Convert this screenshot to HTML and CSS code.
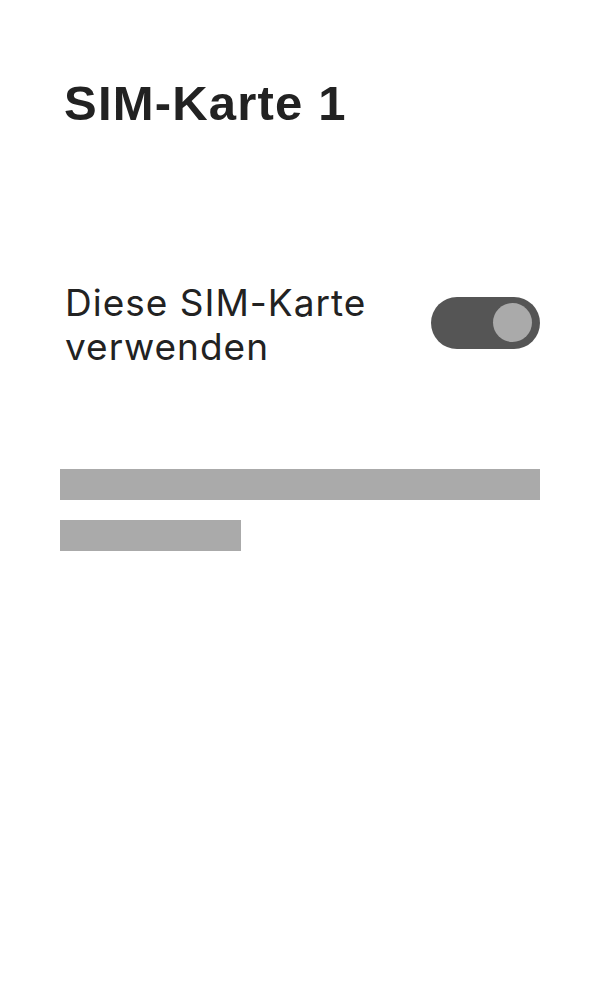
FILE: index.html
```html
<!DOCTYPE html>
<html lang="de">
<head>
<meta charset="utf-8">
<title>SIM-Karte 1</title>
<link rel="stylesheet" href="styles.css">
</head>
<body>
<main class="page">
  <h1 class="title">SIM-Karte 1</h1>
  <div class="setting">
    <span class="setting-label">Diese SIM-Karte verwenden</span>
    <span class="switch" role="switch" aria-checked="true"><span class="switch-knob"></span></span>
  </div>
  <div class="placeholder">
    <div class="placeholder-line placeholder-line--full"></div>
    <div class="placeholder-line placeholder-line--short"></div>
  </div>
</main>
</body>
</html>
```

FILE: styles.css
```css
html, body {
  margin: 0;
  padding: 0;
  background: #ffffff;
}

body {
  font-family: Inter, "Liberation Sans", Arial, sans-serif;
  color: #222222;
}

.page {
  width: 600px;
  box-sizing: border-box;
  padding: 73px 60px 0;
}

.title {
  margin: 0 0 0 4px;
  font-family: "Liberation Sans", Arial, Helvetica, sans-serif;
  font-size: 49px;
  line-height: 60px;
  letter-spacing: 1.2px;
  font-weight: 700;
  color: #222222;
}

.setting {
  display: flex;
  align-items: center;
  justify-content: space-between;
  margin-top: 148px;
}

.setting-label {
  margin-left: 5px;
  width: 340px;
  font-size: 37px;
  line-height: 44px;
  letter-spacing: 1px;
  color: #222222;
}

.switch {
  display: flex;
  align-items: center;
  justify-content: flex-end;
  width: 109px;
  height: 52px;
  box-sizing: border-box;
  padding-right: 8px;
  margin-bottom: 5px;
  border-radius: 26px;
  background: #555555;
}

.switch-knob {
  width: 39px;
  height: 39px;
  border-radius: 50%;
  background: #aaaaaa;
}

.placeholder {
  display: flex;
  flex-direction: column;
  gap: 20px;
  margin-top: 100px;
}

.placeholder-line {
  height: 31px;
  background: #aaaaaa;
}

.placeholder-line--full {
  width: 480px;
}

.placeholder-line--short {
  width: 181px;
}
```
